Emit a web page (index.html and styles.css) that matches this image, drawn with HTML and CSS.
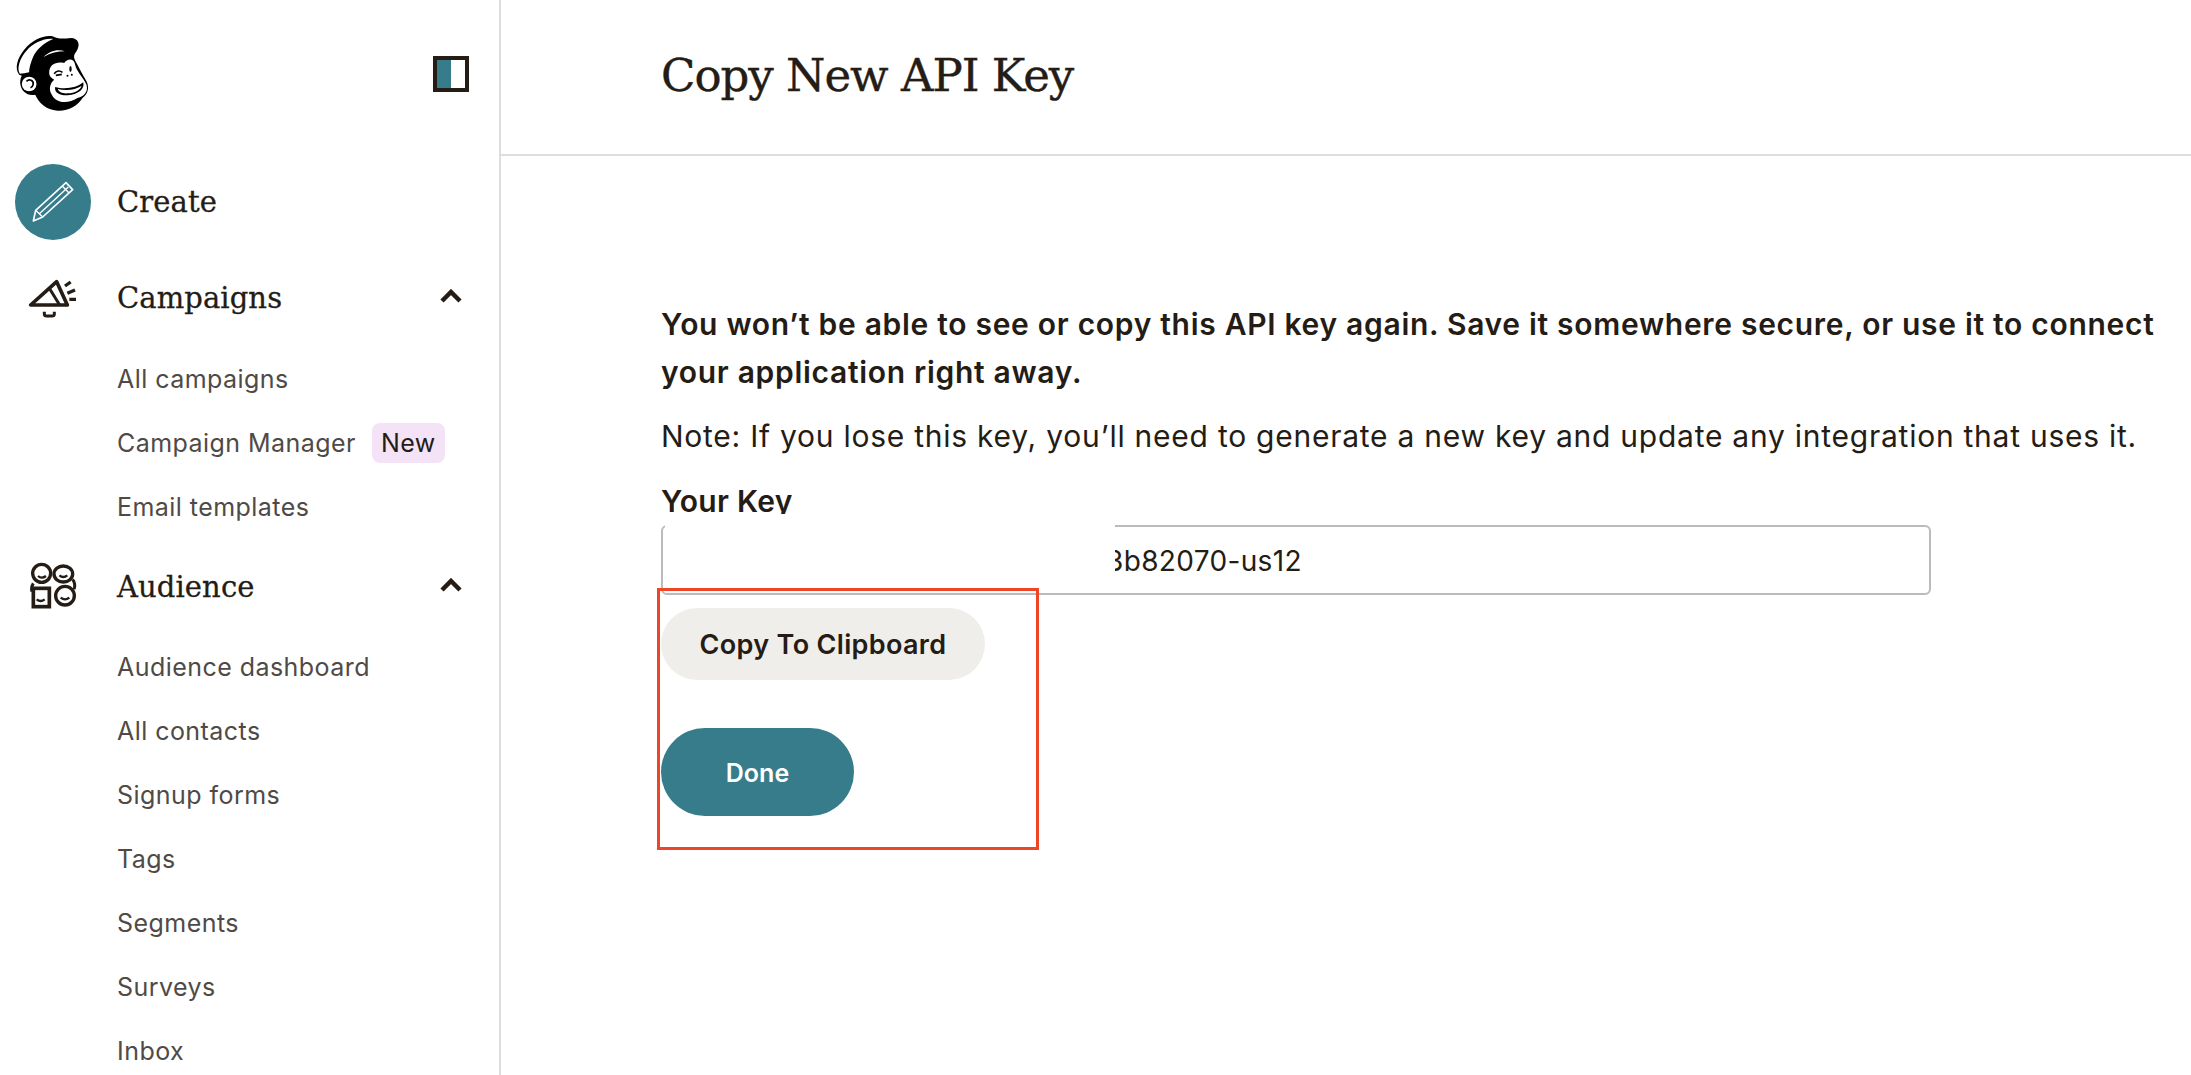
FILE: index.html
```html
<!DOCTYPE html>
<html>
    <head>
    <meta charset="utf-8">
    <title>Copy New API Key</title>
    <link rel="stylesheet" href="styles.css">
    </head>

    <body>
        <div class="sidebar">
            <div class="brand">
                <svg class="logo" viewBox="45 100 230 240">
                    <path d="M60 225C45 205 55 175 75 150C100 120 135 105 160 110C175 118 190 118 215 115C238 115 245 135 232 155C225 165 220 170 232 190C240 205 250 225 262 245C272 265 265 285 250 295C235 320 205 335 175 333C140 330 120 310 108 285C85 290 65 275 63 250C63 240 65 232 68 228Z" fill="#000"/>
                    <path d="M62 222C52 205 62 175 82 153C102 130 135 115 162 118C145 125 120 140 105 165C95 185 90 205 90 218C80 220 70 222 62 222Z" fill="#fff"/>
                    <path d="M133 172C150 155 175 147 197 155C175 155 155 160 133 172Z" fill="#fff"/>
                    <circle cx="90" cy="253" r="22" fill="#fff"/>
                    <path d="M82 245C90 236 104 242 102 254C101 260 97 263 94 264" fill="none" stroke="#000" stroke-width="5"/>
                    <path d="M150 220C150 195 170 185 195 190C205 175 225 175 228 195C232 215 250 230 262 255C268 275 255 290 235 295C205 315 170 310 158 285C148 270 152 250 165 240C155 235 150 228 150 220Z" fill="#fff"/>
                    <path d="M165 222C172 212 182 212 190 218M170 227L188 224" fill="none" stroke="#000" stroke-width="5"/>
                    <ellipse cx="214" cy="208" rx="3.5" ry="9" fill="#000"/>
                    <circle cx="205" cy="228" r="3" fill="#000"/>
                    <circle cx="218" cy="225" r="3" fill="#000"/>
                    <path d="M168 262C195 270 235 265 252 248C258 265 240 285 205 287C180 288 165 278 168 262Z" fill="#000"/>
                    <path d="M176 268C198 274 232 270 247 258C245 270 228 280 205 281C190 282 178 277 176 268Z" fill="#fff"/>
                </svg>
                <div class="toggle"><span></span></div>
            </div>

            <div class="nav-row create-row">
                <div class="nav-icon create-icon">
                    <svg viewBox="45 491 228 228">
                        <path d="M100 662L107 630L198 547L218 568L128 650Z" fill="none" stroke="#fff" stroke-width="5" stroke-linejoin="round"/>
                        <path d="M118 640L205 560M186 556L207 578M107 630L128 650" fill="none" stroke="#fff" stroke-width="4"/>
                    </svg>
                </div>
                <span class="nav-title">Create</span>
            </div>

            <div class="nav-row campaigns-row">
                <div class="nav-icon">
                    <svg viewBox="15 -9 228 228">
                        <path d="M62 135L140 65L172 135Z" fill="none" stroke="#241c15" stroke-width="11" stroke-linejoin="round"/>
                        <path d="M118 85L149 135" fill="none" stroke="#241c15" stroke-width="9"/>
                        <path d="M165 78L182 66M172 100L195 90M178 118L198 118" fill="none" stroke="#241c15" stroke-width="10"/>
                        <path d="M103 155V162Q103 168 110 168H126Q133 168 133 162V155" fill="none" stroke="#241c15" stroke-width="9"/>
                    </svg>
                </div>
                <span class="nav-title">Campaigns</span>
                <svg class="chevron" viewBox="0 0 22 14"><path d="M2 12L11 3L20 12" fill="none" stroke="#241c15" stroke-width="4.5"/></svg>
            </div>
            <ul class="sub-nav campaigns-list">
                <li>All campaigns</li>
                <li>Campaign Manager<span class="badge">New</span></li>
                <li>Email templates</li>
            </ul>

            <div class="nav-row audience-row">
                <div class="nav-icon">
                    <svg viewBox="15 -12 228 228">
                        <path d="M70 100Q62 112 66 125M188 88Q198 102 192 118" fill="none" stroke="#241c15" stroke-width="9"/>
                        <circle cx="95" cy="70" r="27" fill="#fff" stroke="#241c15" stroke-width="10"/>
                        <ellipse cx="160" cy="72" rx="28" ry="24" fill="#fff" stroke="#241c15" stroke-width="10"/>
                        <circle cx="165" cy="137" r="28" fill="#fff" stroke="#241c15" stroke-width="10"/>
                        <rect x="70" y="115" width="48" height="55" fill="#fff" stroke="#241c15" stroke-width="11"/>
                        <path d="M84 78Q95 88 108 78M148 76Q160 86 172 76M152 143Q165 153 178 143M80 148Q92 158 104 148" fill="none" stroke="#241c15" stroke-width="7"/>
                    </svg>
                </div>
                <span class="nav-title">Audience</span>
                <svg class="chevron" viewBox="0 0 22 14"><path d="M2 12L11 3L20 12" fill="none" stroke="#241c15" stroke-width="4.5"/></svg>
            </div>
            <ul class="sub-nav audience-list">
                <li>Audience dashboard</li>
                <li>All contacts</li>
                <li>Signup forms</li>
                <li>Tags</li>
                <li>Segments</li>
                <li>Surveys</li>
                <li>Inbox</li>
            </ul>
        </div>

        <div class="main">
            <div class="page-head">
                <h1>Copy New API Key</h1>
            </div>
            <div class="content">
                <p class="warning">You won’t be able to see or copy this API key again. Save it somewhere secure, or use it to connect your application right away.</p>
                <p class="note">Note: If you lose this key, you’ll need to generate a new key and update any integration that uses it.</p>
                <div class="key-label">Your Key</div>
                <div class="key-box">
                    <div class="key-cover"></div>
                    <span class="key-value">3b82070-us12</span>
                </div>
                <div class="btn btn-copy">Copy To Clipboard</div>
                <div class="btn btn-done"><span>Done</span></div>
                <div class="red-mark"></div>
            </div>
        </div>
    </body>
</html>
```

FILE: styles.css
```css
*{
    padding:0;
    margin:0;
    list-style:none;
    box-sizing:border-box;
}

html,body{
    height:100%;
}

body{
    display:flex;
    height:1075px;
    overflow:hidden;
    background-color:#fff;
    color:#241c15;
    font-family:Inter,"Liberation Sans",sans-serif;
}

/*左侧导航*/
.sidebar{
    width:501px;
    flex-shrink:0;
    border-right:2px solid #ddd;
    overflow:hidden;
}

.brand{
    display:flex;
    align-items:center;
    justify-content:space-between;
    height:76px;
    margin:35px 30px 53px 14px;
}

.logo{
    width:77px;
    height:80px;
}

.toggle{
    width:36px;
    height:36px;
    margin-top:2px;
    border:4px solid #241c15;
}

.toggle span{
    display:block;
    width:14px;
    height:28px;
    background-color:#367c8a;
}

.nav-row{
    display:flex;
    align-items:center;
    height:76px;
    padding-left:15px;
    padding-right:37px;
}

.nav-icon{
    width:76px;
    height:76px;
    flex-shrink:0;
    margin-right:26px;
}

.nav-icon svg{
    display:block;
    width:76px;
    height:76px;
}

.create-icon{
    border-radius:50%;
    background-color:#367c8a;
}

.nav-title{
    font-family:"DejaVu Serif",serif;
    font-size:29px;
    line-height:40px;
    letter-spacing:.1px;
    -webkit-text-stroke:.3px #241c15;
}

.campaigns-row .nav-title,
.audience-row .nav-title{
    margin-top:5px;
}

.chevron{
    width:22px;
    height:14px;
    margin-left:auto;
    margin-top:1px;
}

.campaigns-row{
    margin-top:17px;
}

.audience-row{
    margin-top:7px;
}

.sub-nav{
    padding-left:117px;
    color:#4f4a46;
    font-size:25px;
    letter-spacing:.45px;
}

.sub-nav li{
    display:flex;
    align-items:center;
    height:64px;
    white-space:pre;
}

.campaigns-list{
    margin-top:14px;
}

.audience-list{
    margin-top:13px;
}

.badge{
    display:inline-block;
    height:40px;
    line-height:40px;
    padding:0 9px;
    margin-left:16px;
    border-radius:8px;
    background-color:#f4e3f6;
    color:#241c15;
}

/*右侧内容*/
.main{
    flex:1;
    min-width:0;
}

.page-head{
    height:156px;
    padding:0 0 4px 160px;
    border-bottom:2px solid #ddd;
    display:flex;
    align-items:center;
}

.page-head h1{
    font-family:"DejaVu Serif",serif;
    font-size:45px;
    font-weight:400;
    letter-spacing:-1px;
    -webkit-text-stroke:.4px #241c15;
}

.content{
    position:relative;
    padding:144px 0 0 160px;
}

.warning{
    width:1510px;
    font-size:30px;
    font-weight:600;
    line-height:48px;
    letter-spacing:.7px;
}

.note{
    margin-top:16px;
    font-size:30px;
    line-height:48px;
    letter-spacing:.75px;
    white-space:nowrap;
}

.key-label{
    margin-top:17px;
    font-size:30px;
    font-weight:600;
    line-height:48px;
    letter-spacing:.3px;
}

.key-box{
    position:relative;
    width:1270px;
    height:70px;
    border:2px solid #bbb;
    border-radius:6px;
    padding-left:443px;
    font-size:28px;
    line-height:68px;
    letter-spacing:.35px;
}

/*遮住密钥前半段的白块*/
.key-cover{
    position:absolute;
    left:2px;
    top:-13px;
    width:450px;
    height:79px;
    background-color:#fff;
    z-index:1;
}

.btn{
    display:flex;
    align-items:center;
    justify-content:center;
    border-radius:44px;
}

.btn-copy{
    width:324px;
    height:72px;
    margin-top:13px;
    background-color:#efeeea;
    font-size:27px;
    font-weight:600;
    letter-spacing:.33px;
}

.btn-done{
    width:193px;
    height:88px;
    margin-top:48px;
    padding-top:2px;
    background-color:#367c8a;
    color:#fff;
    font-size:25px;
    font-weight:600;
}

/*红色标注框*/
.red-mark{
    position:absolute;
    left:156px;
    top:432px;
    width:382px;
    height:262px;
    border:3px solid #ee4428;
    z-index:2;
}
```
